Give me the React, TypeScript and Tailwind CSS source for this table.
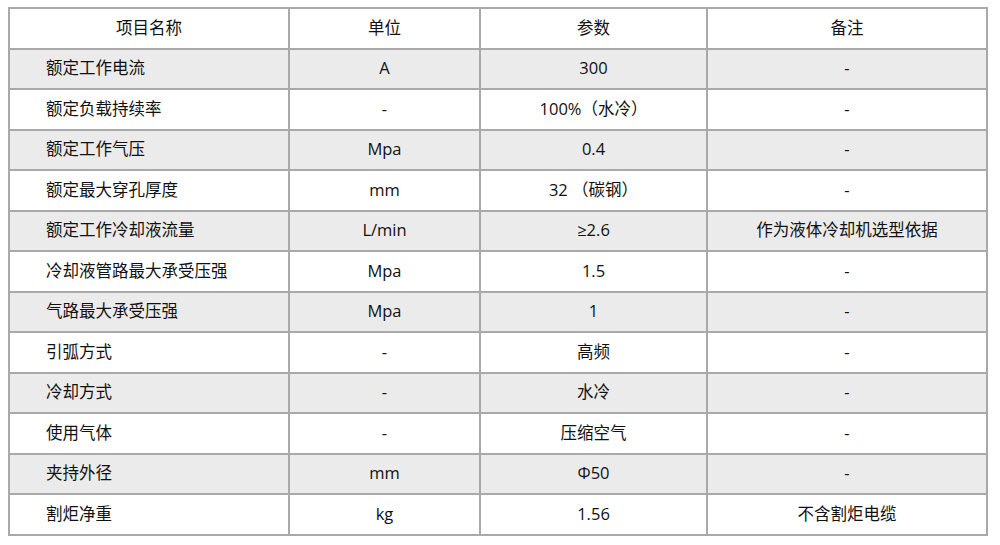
const rows: [string, string, string, string][] = [
  ["额定工作电流", "A", "300", "-"],
  ["额定负载持续率", "-", "100%（水冷）", "-"],
  ["额定工作气压", "Mpa", "0.4", "-"],
  ["额定最大穿孔厚度", "mm", "32 （碳钢）", "-"],
  ["额定工作冷却液流量", "L/min", "≥2.6", "作为液体冷却机选型依据"],
  ["冷却液管路最大承受压强", "Mpa", "1.5", "-"],
  ["气路最大承受压强", "Mpa", "1", "-"],
  ["引弧方式", "-", "高频", "-"],
  ["冷却方式", "-", "水冷", "-"],
  ["使用气体", "-", "压缩空气", "-"],
  ["夹持外径", "mm", "Φ50", "-"],
  ["割炬净重", "kg", "1.56", "不含割炬电缆"],
];

const cell = "border-2 border-[#a9a9a9] text-center align-middle";

export default function App() {
  return (
    <div className="min-h-[545px] bg-white pl-[8px] pt-[7px] text-[16.5px] text-[#111] [font-family:'Open_Sans','Noto_Sans_CJK_SC',sans-serif]">
      <table className="w-[978px] table-fixed border-collapse">
        <colgroup>
          <col className="w-[280px]" />
          <col className="w-[191px]" />
          <col className="w-[227px]" />
          <col className="w-[280px]" />
        </colgroup>
        <thead>
          <tr className="h-[40.5px] bg-white">
            <th className={`${cell} font-normal`}>项目名称</th>
            <th className={`${cell} font-normal`}>单位</th>
            <th className={`${cell} font-normal`}>参数</th>
            <th className={`${cell} font-normal`}>备注</th>
          </tr>
        </thead>
        <tbody>
          {rows.map((r, i) => (
            <tr key={r[0]} className={`h-[40.5px] ${i % 2 === 0 ? "bg-[#ebebeb]" : "bg-white"}`}>
              <td className="border-2 border-[#a9a9a9] pl-[36px] text-left align-middle">{r[0]}</td>
              <td className={cell}>{r[1]}</td>
              <td className={cell}>{r[2]}</td>
              <td className={cell}>{r[3]}</td>
            </tr>
          ))}
        </tbody>
      </table>
    </div>
  );
}
